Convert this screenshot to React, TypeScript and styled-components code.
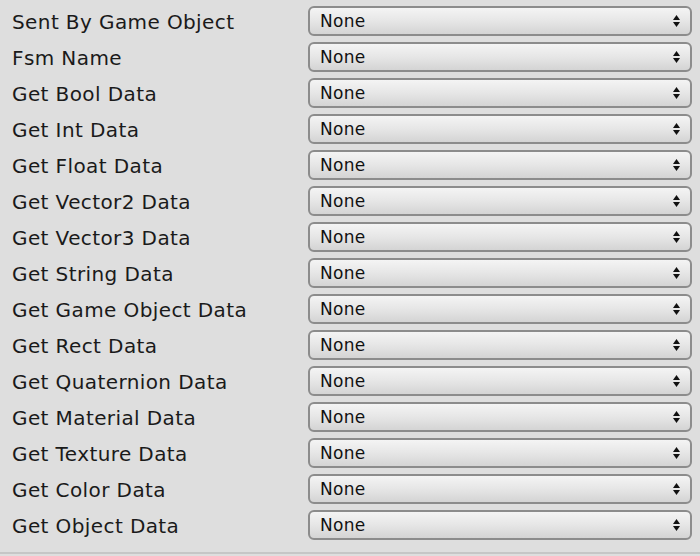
import React from 'react';
import styled, {createGlobalStyle} from 'styled-components';

const GlobalStyle = createGlobalStyle`
  html, body {
    margin: 0;
    padding: 0;
    background: #dedede;
  }
`;

const Panel = styled.div`
  display: flex;
  flex-direction: column;
  padding: 6px 0 6px;
  width: 700px;
  background: #dedede;
  border-bottom: 2px solid #c6c6c6;
`;

const Row = styled.div`
  display: grid;
  grid-template-columns: 308px 384px;
  align-items: center;
  height: 36px;
`;

const Label = styled.span`
  padding-left: 12px;
  margin-top: -4px;
  font-family: 'DejaVu Sans', Verdana, sans-serif;
  font-size: 20px;
  letter-spacing: 0.4px;
  color: #1a1a1a;
  white-space: nowrap;
`;

const Select = styled.div`
  display: flex;
  align-items: center;
  justify-content: space-between;
  box-sizing: border-box;
  height: 30px;
  margin-top: -6px;
  padding: 0 10px 0 10px;
  border: 2px solid #8c8c8c;
  border-radius: 6px;
  background: linear-gradient(to bottom, #f4f4f4 0%, #e6e6e6 50%, #d4d4d4 100%);
  font-family: 'DejaVu Sans', Verdana, sans-serif;
  font-size: 17px;
  letter-spacing: 0.3px;
  color: #111;
`;

const Arrows = () => (
  <svg width="7" height="12" viewBox="0 0 7 12">
    <path d="M3.5 0 L7 5 L0 5 Z" fill="#111" />
    <path d="M0 7 L7 7 L3.5 12 Z" fill="#111" />
  </svg>
);

const fields = [
  'Sent By Game Object',
  'Fsm Name',
  'Get Bool Data',
  'Get Int Data',
  'Get Float Data',
  'Get Vector2 Data',
  'Get Vector3 Data',
  'Get String Data',
  'Get Game Object Data',
  'Get Rect Data',
  'Get Quaternion Data',
  'Get Material Data',
  'Get Texture Data',
  'Get Color Data',
  'Get Object Data',
];

const App = () => {
  return (
    <>
      <GlobalStyle />
      <Panel>
        {fields.map((name) => (
          <Row key={name}>
            <Label>{name}</Label>
            <Select>
              <span>None</span>
              <Arrows />
            </Select>
          </Row>
        ))}
      </Panel>
    </>
  );
};

export default App;
